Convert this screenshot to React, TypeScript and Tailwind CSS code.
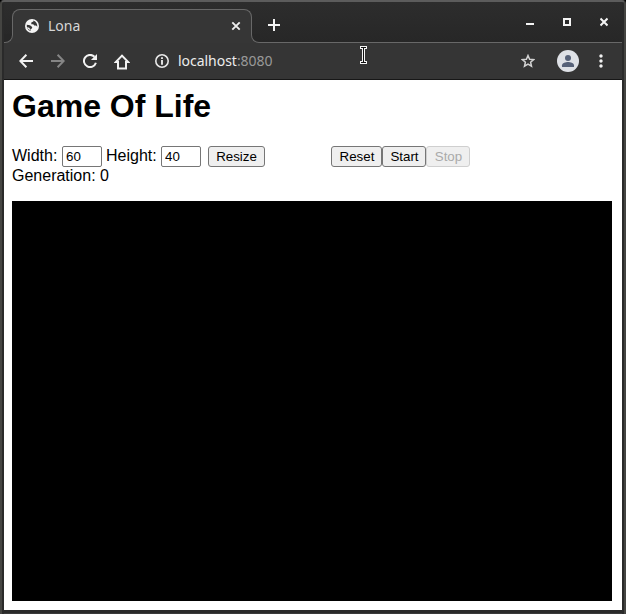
import React from "react";
import { MdMoreVert } from "react-icons/md";

const buttonBase = "h-[21px] shrink-0 rounded-[3px] border bg-[#efefef] text-center text-[13.333px] leading-[19px]";

function TabStrip() {
  return (
    <div className="flex h-[41px] items-end border-b border-[#686868] bg-linear-to-b from-[#2d2d2d] to-[#272727] pl-2">
      <div className="relative -mb-px flex h-[34px] w-[240px] shrink-0 items-center rounded-t-[8px] border border-b-0 border-[#686868] bg-[#363636] pl-[12px] pr-[9px]">
        <svg className="-mt-px" width="14" height="14" viewBox="0 0 14 14">
          <circle cx="7" cy="7" r="7" fill="#f4f4f4" />
          <path d="M8.4 1.6V2.6L6.3 3.5V5.2H8.3L9.2 6.6H11L12.3 7.8C12.5 5.3 11.2 2.4 8.4 1.6ZM1.8 5.8L5 6.3L7.2 8L7 9.4L5.5 10.1V12.1C3 11.4 1.4 8.8 1.8 5.8Z" fill="#363636" />
          <path d="M2.2 8.1L4.6 9L5.1 11.4L2.6 9.6Z" fill="#f4f4f4" />
        </svg>
        <span className="-mt-[2px] ml-[9px] font-['Noto_Sans',sans-serif] text-[14px] leading-[18px] text-[#d6d6d6]">Lona</span>
        <svg className="-mt-px ml-auto" width="12" height="12" viewBox="0 0 12 12" fill="none" stroke="#eeeeee" strokeWidth="1.9">
          <path d="M2.3 2.3l7.4 7.4M9.7 2.3l-7.4 7.4" />
        </svg>
        <div className="absolute -left-[9px] bottom-0 h-[9px] w-[9px] bg-[#363636]">
          <div className="h-full w-full rounded-br-[8px] border-b border-r border-[#686868] bg-[#272727]" />
        </div>
        <div className="absolute -right-[9px] bottom-0 h-[9px] w-[9px] bg-[#363636]">
          <div className="h-full w-full rounded-bl-[8px] border-b border-l border-[#686868] bg-[#272727]" />
        </div>
      </div>
      <div className="flex h-[34px] flex-1 items-center pl-[16px]">
        <svg width="12" height="12" viewBox="0 0 12 12" fill="none" stroke="#f4f4f4" strokeWidth="2">
          <path d="M6 0v12M0 6h12" />
        </svg>
      </div>
      <div className="flex h-[41px] items-center gap-[29px] pr-[14px]">
        <svg width="8" height="10" viewBox="0 0 8 10" shapeRendering="crispEdges">
          <path d="M0 6h8v2H0z" fill="#f4f4f4" />
        </svg>
        <svg width="8" height="10" viewBox="0 0 8 10" fill="none" stroke="#f4f4f4" strokeWidth="2" shapeRendering="crispEdges">
          <path d="M1 2h6v6h-6z" />
        </svg>
        <svg width="8" height="10" viewBox="0 0 8 10" fill="none" stroke="#f4f4f4" strokeWidth="2">
          <path d="M.5 1.5l7 7M7.5 1.5l-7 7" />
        </svg>
      </div>
    </div>
  );
}

function Toolbar() {
  return (
    <div className="flex h-[37px] items-center border-b border-[#171717] bg-[#353535] pl-[15px] pr-[13px] text-[#f2f2f2]">
      <svg width="14" height="14" viewBox="0 0 14 14" fill="none" stroke="#f2f2f2" strokeWidth="2">
        <path d="M14 7H1.5M7.4 .8L1.3 7l6.1 6.2" />
      </svg>
      <svg className="ml-[18px]" width="14" height="14" viewBox="0 0 14 14" fill="none" stroke="#858585" strokeWidth="2">
        <path d="M0 7h12.5M6.6 .8L12.7 7l-6.1 6.2" />
      </svg>
      <svg className="ml-[18px]" width="14" height="14" viewBox="0 0 14 14">
        <path d="M12.9 8.8A6.1 6.1 0 1 1 11.5 2.8" fill="none" stroke="#f2f2f2" strokeWidth="2" />
        <path d="M14 0v6.1H7.9z" fill="#f2f2f2" />
      </svg>
      <svg className="ml-[17px]" width="16" height="17" viewBox="0 0 16 17" fill="none" stroke="#f2f2f2" strokeWidth="2">
        <path d="M1.8 9H4V15.5H12V9H14.2L8 2.6Z" />
      </svg>
      <svg className="ml-[25px]" width="14" height="14" viewBox="0 0 14 14">
        <circle cx="7" cy="7" r="6.2" fill="none" stroke="#e8e8e8" strokeWidth="1.6" />
        <path d="M6.1 3.3h1.8v1.8H6.1zM6.1 6.1h1.8v4.6H6.1z" fill="#f2f2f2" />
      </svg>
      <span className="ml-[9px] font-['Noto_Sans',sans-serif] text-[14px] leading-[18px] tracking-[-0.03px] text-[#ececec]">
        localhost<span className="text-[#999]">:8080</span>
      </span>
      <svg className="ml-auto" width="14" height="14" viewBox="0 0 14 14" fill="none" stroke="#d2d2d2" strokeWidth="1.5">
        <path d="M7 1.5L8.6 5.2L12.6 5.6L9.6 8.2L10.5 12.2L7 10.1L3.5 12.2L4.4 8.2L1.4 5.6L5.4 5.2Z" />
      </svg>
      <svg className="ml-[22px]" width="22" height="22" viewBox="0 0 22 22">
        <circle cx="11" cy="11" r="11" fill="#dee1e6" />
        <circle cx="11" cy="8" r="3" fill="#566178" />
        <path d="M5 17v-1.8c0-2 3.8-3.2 6-3.2s6 1.2 6 3.2V17z" fill="#566178" />
      </svg>
      <MdMoreVert className="-mr-[2px] ml-[12px]" size={20} />
    </div>
  );
}

export default function App() {
  return (
    <div className="relative h-[614px] w-[626px] overflow-hidden bg-black">
      <div className="flex h-full flex-col overflow-hidden rounded-t-[4px] border-x-2 border-t-2 border-x-[#454542] border-t-[#5c5c5c] bg-[#2a2a2a]">
        <div className="flex min-h-0 flex-1 flex-col px-[2px]">
          <TabStrip />
          <Toolbar />
          <main className="h-[530px] bg-white px-2 pt-2 font-['Liberation_Sans',Arial,sans-serif] text-[16px] leading-[18px] text-black">
            <h1 className="h-[37px] text-[32px] font-bold leading-[37px]">Game Of Life</h1>
            <div className="mt-[21px] flex h-[21px] items-center whitespace-nowrap">
              <label className="-mt-[2px] w-[50px]">Width:</label>
              <input className="h-[21px] w-[40px] rounded-[2px] border border-[#767676] bg-white px-[3px] text-[13.333px]" defaultValue="60" />
              <label className="-mt-[2px] ml-[4px] w-[55px]">Height:</label>
              <input className="h-[21px] w-[40px] rounded-[2px] border border-[#767676] bg-white px-[3px] text-[13.333px]" defaultValue="40" />
              <button className={`${buttonBase} ml-[7px] w-[57px] border-[#767676]`}>Resize</button>
              <button className={`${buttonBase} ml-[66px] w-[51px] border-[#767676] pl-px`}>Reset</button>
              <button className={`${buttonBase} w-[44px] border-[#767676] pl-px`}>Start</button>
              <button className={`${buttonBase} w-[44px] border-[#cfcfcf] pl-px text-[#aaaaaa]`} disabled>Stop</button>
            </div>
            <div>Generation: 0</div>
            <div className="mt-[16px] h-[400px] w-[600px] bg-black" />
          </main>
          <div className="h-[4px] border-b border-[#3a3a3a] bg-[#2a2a2a]" />
        </div>
      </div>
      <svg className="absolute left-[360px] top-[45px]" width="8" height="20" viewBox="0 0 8 20" shapeRendering="crispEdges">
        <path d="M0 1h7v3H5v12h2v3H0v-3h2V4H0z" fill="#f5f5f5" />
        <path d="M1 2h5v1H4v14h2v1H1v-1h2V3H1z" fill="#111" />
      </svg>
    </div>
  );
}
